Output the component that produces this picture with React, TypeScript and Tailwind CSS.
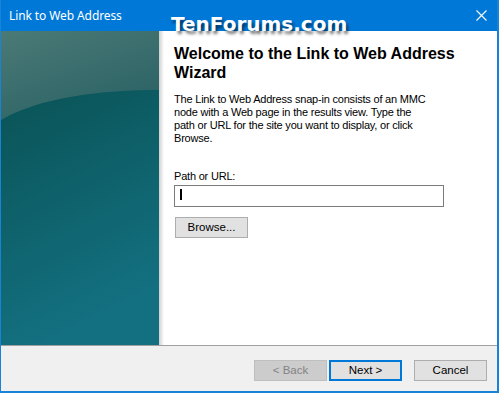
import React from 'react';

const sans = "font-['Liberation_Sans',Arial,sans-serif]";

function SidePanel() {
  return (
    <svg width="158" height="314" viewBox="0 0 158 314" className="block">
      <defs>
        <linearGradient id="base" x1="0" y1="0" x2="0.25" y2="1">
          <stop offset="0" stopColor="#0a4d51" />
          <stop offset="0.3" stopColor="#0b575c" />
          <stop offset="1" stopColor="#137080" />
        </linearGradient>
        <linearGradient id="top" x1="0" y1="0" x2="0.6" y2="1">
          <stop offset="0" stopColor="#4b7a76" />
          <stop offset="1" stopColor="#2c6366" />
        </linearGradient>
      </defs>
      <rect width="158" height="314" fill="url(#base)" />
      <path d="M0,0 H158 V59 C100,59 40,66 0,89 Z" fill="url(#top)" />
    </svg>
  );
}

function WinButton({ children, disabled, primary }: { children: React.ReactNode; disabled?: boolean; primary?: boolean }) {
  const base = `w-[73px] h-[21px] flex items-center justify-center text-[11.5px] ${sans}`;
  if (disabled) return <div className={`${base} bg-[#cccccc] border border-[#bfbfbf] text-[#838383]`}>{children}</div>;
  if (primary) return <div className={`${base} bg-[#e1e1e1] border-2 border-[#0078d7] text-black`}>{children}</div>;
  return <div className={`${base} bg-[#e1e1e1] border border-[#adadad] text-black`}>{children}</div>;
}

export default function App() {
  return (
    <div className="relative w-[499px] h-[393px] flex flex-col bg-white border-l border-r-2 border-b-2 border-[#1883d7] overflow-hidden">
      {/* Title bar */}
      <div className="h-[31px] shrink-0 -ml-px -mr-[2px] bg-[#0078d7] flex items-center justify-between pl-[9px] pr-[12px]">
        <span className="text-white text-[12px] font-['Noto_Sans',sans-serif] tracking-[-0.1px] pt-px">Link to Web Address</span>
        <svg width="11" height="11" viewBox="0 0 11 11" className="-mt-px">
          <path d="M0.5,0.5 L10.5,10.5 M10.5,0.5 L0.5,10.5" stroke="#fff" strokeWidth="1.1" />
        </svg>
      </div>

      {/* Body */}
      <div className="flex h-[314px] shrink-0">
        <SidePanel />
        <div className="w-[5px] bg-gradient-to-r from-[#cfcfcf] to-white" />
        <div className={`flex-1 pl-[10px] pt-[13px] ${sans}`}>
          <h1 className="text-[16px] leading-[19px] font-bold text-black">
            Welcome to the Link to Web Address
            <br />
            Wizard
          </h1>
          <p className="mt-[11px] text-[11px] leading-[13px] tracking-[-0.2px] text-black">
            The Link to Web Address snap-in consists of an MMC
            <br />
            node with a Web page in the results view. Type the
            <br />
            path or URL for the site you want to display, or click
            <br />
            Browse.
          </p>
          <div className="mt-[25px] text-[11px] leading-[13px] tracking-[-0.2px] text-black">Path or URL:</div>
          <div className="mt-[2px] w-[270px] h-[22px] border border-[#7a7a7a] flex items-start pl-[5px] pt-[3px]">
            <div className="w-[2px] h-[11px] bg-black" />
          </div>
          <div className="mt-[10px] ml-px">
            <WinButton>Browse...</WinButton>
          </div>
        </div>
      </div>

      {/* Footer */}
      <div className="flex-1 border-t border-[#a0a0a0] bg-[#f0f0f0] flex items-start justify-end pt-[14px] pr-[10px]">
        <WinButton disabled>&lt; Back</WinButton>
        <div className="ml-[2px]">
          <WinButton primary>Next &gt;</WinButton>
        </div>
        <div className="ml-[12px]">
          <WinButton>Cancel</WinButton>
        </div>
      </div>

      {/* Watermark */}
      <div className="absolute left-[170px] top-[14px] text-[20px] leading-[20px] font-bold text-white font-['DejaVu_Sans',sans-serif] [text-shadow:2px_3px_3px_rgba(0,0,0,0.55)]">
        TenForums.com
      </div>
    </div>
  );
}
